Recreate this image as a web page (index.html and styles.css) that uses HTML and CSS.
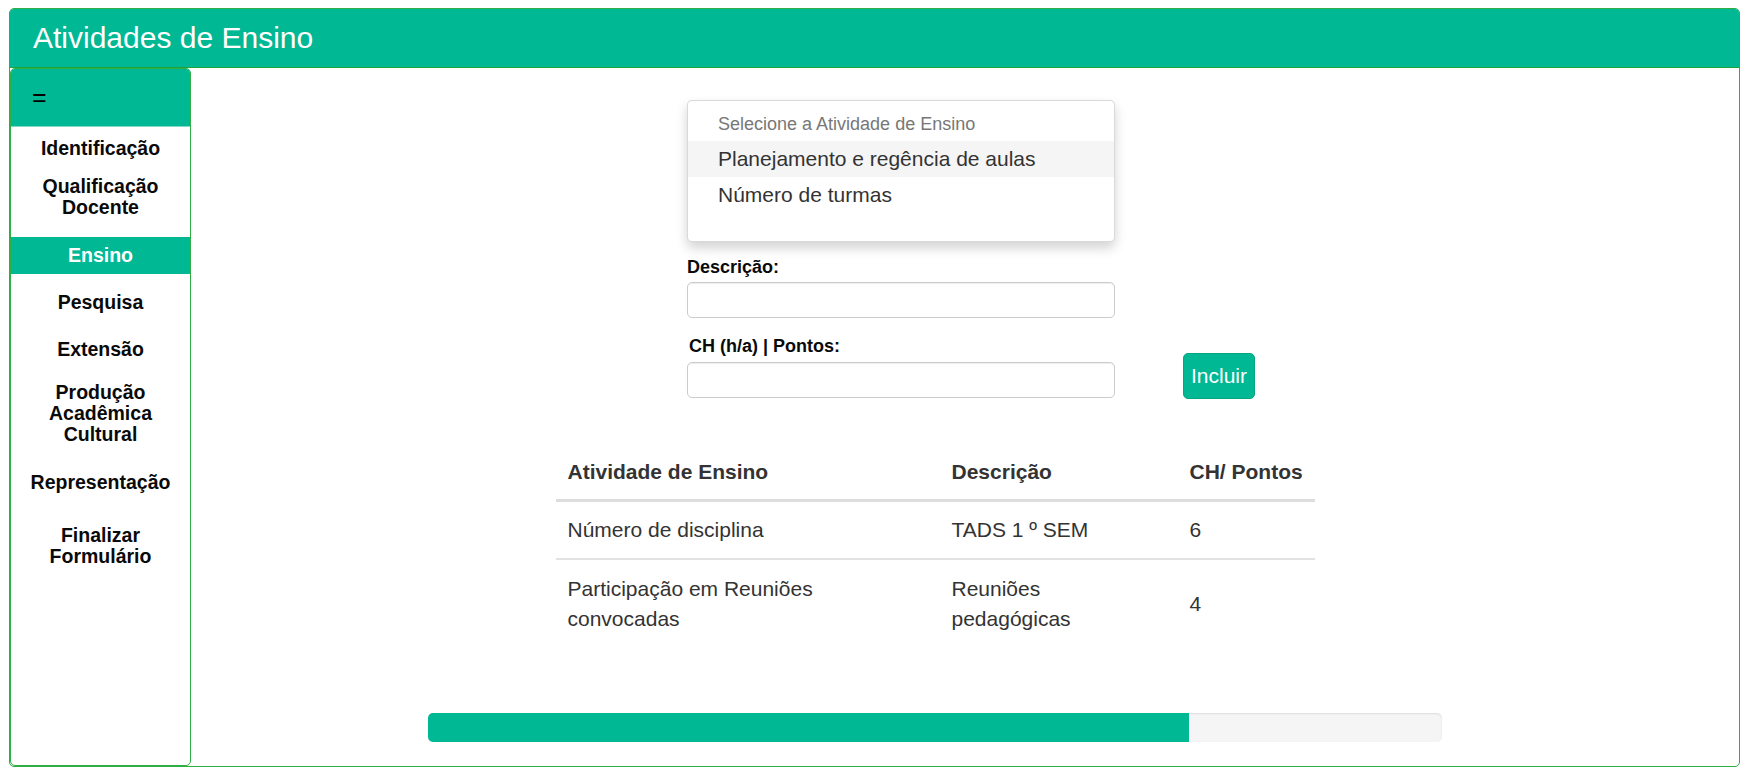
FILE: index.html
```html
<!DOCTYPE html>
<html lang="pt-BR">
<head>
<meta charset="utf-8">
<title>Atividades de Ensino</title>
<link rel="stylesheet" href="styles.css">
</head>
<body>
<div class="panel">
  <header class="panel-header">
    <h1 class="panel-title">Atividades de Ensino</h1>
  </header>
  <div class="panel-body">
    <aside class="sidebar">
      <div class="sidebar-head"><span class="menu-toggle">=</span></div>
      <nav class="nav">
        <a class="nav-item nav-first">Identificação</a>
        <a class="nav-item nav-tight">Qualificação<br>Docente</a>
        <a class="nav-item nav-active">Ensino</a>
        <a class="nav-item">Pesquisa</a>
        <a class="nav-item">Extensão</a>
        <a class="nav-item nav-compact">Produção<br>Acadêmica<br>Cultural</a>
        <a class="nav-item nav-after">Representação</a>
        <a class="nav-item nav-spaced">Finalizar<br>Formulário</a>
      </nav>
    </aside>
    <main class="content">
      <form class="entry-form">
        <div class="fields">
          <div class="select-menu">
            <div class="option option-placeholder">Selecione a Atividade de Ensino</div>
            <div class="option option-hover">Planejamento e regência de aulas</div>
            <div class="option">Número de turmas</div>
          </div>
          <label class="field-label label-desc">Descrição:</label>
          <input class="field-input" type="text">
          <label class="field-label label-ch">CH (h/a) | Pontos:</label>
          <input class="field-input" type="text">
        </div>
        <button class="btn-add" type="button">Incluir</button>
      </form>
      <table class="data-table">
        <colgroup>
          <col class="col-activity">
          <col class="col-desc">
          <col class="col-points">
        </colgroup>
        <thead>
          <tr>
            <th class="cell-activity">Atividade de Ensino</th>
            <th class="cell-desc">Descrição</th>
            <th class="cell-points">CH/ Pontos</th>
          </tr>
        </thead>
        <tbody>
          <tr>
            <td class="cell-activity">Número de disciplina</td>
            <td class="cell-desc">TADS 1 º SEM</td>
            <td class="cell-points">6</td>
          </tr>
          <tr>
            <td class="cell-activity">Participação em Reuniões convocadas</td>
            <td class="cell-desc">Reuniões pedagógicas</td>
            <td class="cell-points">4</td>
          </tr>
        </tbody>
      </table>
      <div class="progress"><div class="progress-bar" style="width:75%"></div></div>
    </main>
  </div>
</div>
</body>
</html>
```

FILE: styles.css
```css
* { box-sizing: border-box; }

body {
  margin: 0;
  background: #fff;
  font-family: "Liberation Sans", Arial, sans-serif;
  color: #111;
}

.panel {
  margin: 8px 0 0 9px;
  width: 1731px;
  height: 759px;
  border: 1px solid #2fae43;
  border-radius: 5px;
  display: flex;
  flex-direction: column;
  overflow: hidden;
}

.panel-header {
  height: 59px;
  flex: none;
  background: #00b894;
  border-bottom: 1px solid #1ea53a;
  display: flex;
  align-items: center;
  padding-left: 23px;
}

.panel-title {
  margin: 0;
  font-size: 30px;
  font-weight: normal;
  line-height: 1;
  color: #fff;
}

.panel-body {
  flex: 1;
  display: flex;
  min-height: 0;
}

/* Sidebar */
.sidebar {
  width: 181px;
  flex: none;
  border: 1px solid #2fae43;
  border-radius: 5px;
  overflow: hidden;
  display: flex;
  flex-direction: column;
}

.sidebar-head {
  height: 58px;
  flex: none;
  background: #00b894;
  border-bottom: 1px solid #7fd9c4;
  display: flex;
  align-items: center;
  padding-left: 21px;
}

.menu-toggle {
  font-size: 25px;
  font-weight: normal;
  color: #000;
  line-height: 1;
}

.nav {
  display: flex;
  flex-direction: column;
}

.nav-item {
  display: block;
  text-align: center;
  font-size: 19.5px;
  font-weight: bold;
  line-height: 21px;
  padding: 8px 0;
  margin-top: 10px;
  color: #0a0a0a;
}

.nav-first { margin-top: 3px; }
.nav-tight { margin-top: 1px; }
.nav-active {
  margin-top: 11px;
  background: #00b894;
  color: #fff;
}
.nav-compact { margin-top: 6px; }
.nav-after { margin-top: 11px; }
.nav-spaced { margin-top: 16px; }

/* Main content */
.content {
  flex: 1;
  display: flex;
  flex-direction: column;
  padding: 32px 60px 0 0;
  min-width: 0;
}

.entry-form {
  align-self: flex-start;
  margin: 0 0 0 496px;
  display: flex;
  align-items: flex-end;
}

.fields {
  width: 428px;
}

.select-menu {
  background: #fff;
  border: 1px solid rgba(0, 0, 0, 0.15);
  border-radius: 5px;
  box-shadow: 0 6px 12px rgba(0, 0, 0, 0.175);
  padding: 6px 0 28px;
}

.option {
  padding-left: 30px;
  font-size: 21px;
  line-height: 36px;
  color: #333;
  white-space: nowrap;
}

.option-placeholder {
  font-size: 18px;
  line-height: 34px;
  color: #777;
}

.option-hover {
  background: #f5f5f5;
}

.field-label {
  display: block;
  font-size: 18px;
  font-weight: bold;
  line-height: 20px;
  color: #0a0a0a;
}

.label-desc { margin-top: 15px; }
.label-ch { margin-top: 18px; padding-left: 2px; }

.field-input {
  display: block;
  width: 428px;
  height: 36px;
  margin-top: 5px;
  border: 1px solid #ccc;
  border-radius: 5px;
  box-shadow: inset 0 1px 1px rgba(0, 0, 0, 0.075);
  font: inherit;
  padding: 0 12px;
}

.label-ch + .field-input { margin-top: 6px; }

.btn-add {
  width: 72px;
  height: 46px;
  margin: 0 0 -1px 68px;
  padding: 0;
  background: #00b894;
  border: 1px solid #03a683;
  border-radius: 5px;
  color: #fff;
  font-family: "Liberation Sans", Arial, sans-serif;
  font-size: 21px;
}

/* Table */
.data-table {
  align-self: center;
  width: 759px;
  margin-top: 47px;
  border-collapse: separate;
  border-spacing: 0;
  table-layout: fixed;
  color: #333;
  font-size: 21px;
  line-height: 30px;
}

.col-activity { width: 384px; }
.col-desc { width: 238px; }
.col-points { width: 137px; }

.data-table th {
  text-align: left;
  font-weight: bold;
  padding: 12px 12px;
  border-bottom: 3px solid #ddd;
  vertical-align: bottom;
  white-space: nowrap;
}

.data-table td {
  padding: 14px 12px;
  border-top: 2px solid #e2e2e2;
  vertical-align: middle;
}

.data-table tbody tr:first-child td {
  border-top: none;
  padding-top: 13px;
  padding-bottom: 13px;
}

.data-table td.cell-activity { padding-right: 24px; }
.data-table td.cell-desc { padding-right: 24px; }
.data-table .cell-points { padding-right: 4px; }

/* Progress */
.progress {
  align-self: center;
  width: 1014px;
  height: 29px;
  margin-top: 65px;
  background: #f5f5f5;
  border-radius: 5px;
  box-shadow: inset 0 1px 2px rgba(0, 0, 0, 0.1);
  overflow: hidden;
}

.progress-bar {
  height: 100%;
  background: #00b894;
}
```
